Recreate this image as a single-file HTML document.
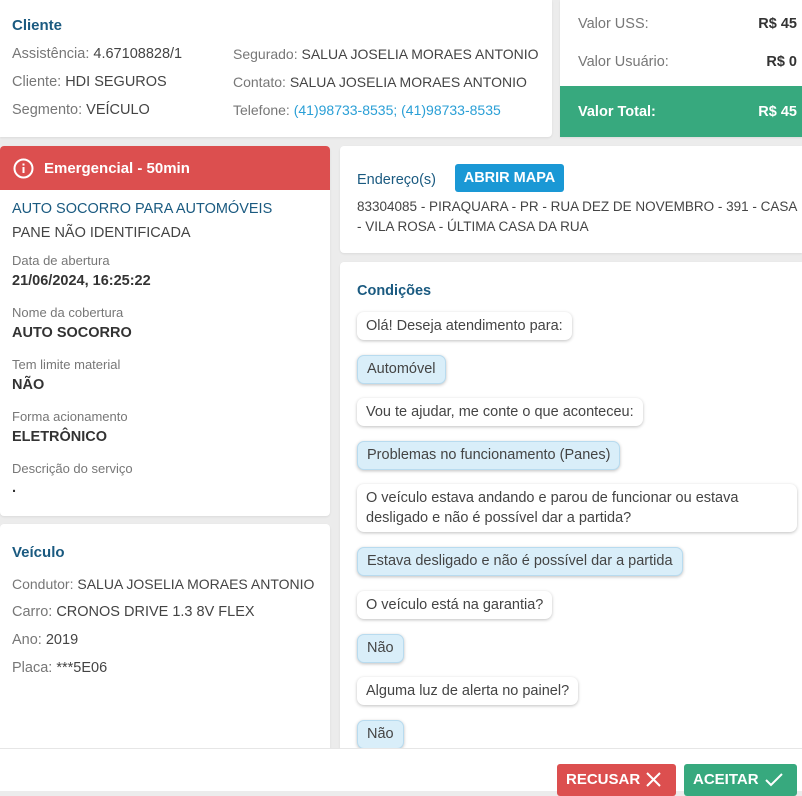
<!DOCTYPE html>
<html><head><meta charset="utf-8">
<style>
*{box-sizing:border-box;margin:0;padding:0}
body{width:802px;height:791px;overflow:hidden;background:#ececec;font-family:"Liberation Sans",sans-serif;font-size:14.5px;color:#444;position:relative}
.card{position:absolute;background:#fff;border-radius:4px;box-shadow:0 1px 2px rgba(0,0,0,.08)}
.t{position:absolute;white-space:nowrap}
.h{color:#1a5a80;font-weight:bold;font-size:15px}
.g{color:#777}
.lbl{color:#777;font-size:13px}
.b{font-weight:bold;color:#333}
.bub{position:absolute;left:357px;background:#fff;border-radius:7px;box-shadow:0 1px 3px rgba(0,0,0,.25);padding:0 9px;line-height:28px;white-space:nowrap;color:#444;font-size:14.5px}
.blue{background:#d9eef9;border:1px solid #b8dbef;line-height:27px}
</style></head><body>
<div class="card" style="left:0;top:0;width:552px;height:137px;border-radius:0 0 4px 0">
<div class="t h" style="left:12px;top:17px">Cliente</div>
<div class="t" style="left:12px;top:46px"><span class="g">Assistência:</span> 4.67108828/1</div>
<div class="t" style="left:12px;top:74px"><span class="g">Cliente:</span> HDI SEGUROS</div>
<div class="t" style="left:12px;top:102px"><span class="g">Segmento:</span> VEÍCULO</div>
<div class="t" style="left:233px;top:46px;font-size:14px"><span class="g">Segurado:</span> SALUA JOSELIA MORAES ANTONIO</div>
<div class="t" style="left:233px;top:74px;font-size:14px"><span class="g">Contato:</span> SALUA JOSELIA MORAES ANTONIO</div>
<div class="t" style="left:233px;top:102px;font-size:14px"><span class="g">Telefone:</span> <span style="color:#2a9fd6">(41)98733-8535; (41)98733-8535</span></div>
</div>
<div class="card" style="left:560px;top:0;width:242px;height:137px;border-radius:0;overflow:hidden">
<div class="t g" style="left:18px;top:16px">Valor USS:</div>
<div class="t b" style="right:5px;top:16px">R$ 45</div>
<div class="t g" style="left:18px;top:54px">Valor Usuário:</div>
<div class="t b" style="right:5px;top:54px">R$ 0</div>
<div style="position:absolute;left:0;top:86px;width:242px;height:51px;background:#37a97e;color:#fff">
<div class="t" style="left:18px;top:18px;font-weight:bold">Valor Total:</div>
<div class="t" style="right:5px;top:18px;font-weight:bold">R$ 45</div></div>
</div>
<div class="card" style="left:0;top:146px;width:330px;height:370px;overflow:hidden">
<div style="height:44px;background:#dc4f4f;color:#fff;position:relative">
<svg style="position:absolute;left:13px;top:12px" width="21" height="21" viewBox="0 0 21 21"><circle cx="10.5" cy="10.5" r="9" fill="none" stroke="#fff" stroke-width="2"/><rect x="9.5" y="9" width="2" height="6" fill="#fff"/><rect x="9.5" y="5.5" width="2" height="2" fill="#fff"/></svg>
<div class="t" style="left:44px;top:14px;font-weight:bold;font-size:15px">Emergencial - 50min</div></div>
<div class="t" style="left:12px;top:55px;color:#1a5a80;font-size:14.5px">AUTO SOCORRO PARA AUTOMÓVEIS</div>
<div class="t" style="left:12px;top:79px">PANE NÃO IDENTIFICADA</div>
<div class="t lbl" style="left:12px;top:107px">Data de abertura</div>
<div class="t b" style="left:12px;top:127px">21/06/2024, 16:25:22</div>
<div class="t lbl" style="left:12px;top:159px">Nome da cobertura</div>
<div class="t b" style="left:12px;top:179px">AUTO SOCORRO</div>
<div class="t lbl" style="left:12px;top:211px">Tem limite material</div>
<div class="t b" style="left:12px;top:231px">NÃO</div>
<div class="t lbl" style="left:12px;top:263px">Forma acionamento</div>
<div class="t b" style="left:12px;top:283px">ELETRÔNICO</div>
<div class="t lbl" style="left:12px;top:315px">Descrição do serviço</div>
<div class="t b" style="left:12px;top:334px">.</div>
</div>
<div class="card" style="left:0;top:524px;width:330px;height:230px">
<div class="t h" style="left:12px;top:20px">Veículo</div>
<div class="t" style="left:12px;top:52px;font-size:14px"><span class="g">Condutor:</span> SALUA JOSELIA MORAES ANTONIO</div>
<div class="t" style="left:12px;top:80px"><span class="g">Carro:</span> CRONOS DRIVE 1.3 8V FLEX</div>
<div class="t" style="left:12px;top:108px"><span class="g">Ano:</span> 2019</div>
<div class="t" style="left:12px;top:136px"><span class="g">Placa:</span> ***5E06</div>
</div>
<div class="card" style="left:340px;top:146px;width:462px;height:107px;border-radius:4px 0 0 4px">
<div class="t h" style="left:17px;top:26px;font-weight:normal;font-size:14.5px">Endereço(s)</div>
<div style="position:absolute;left:115px;top:18px;width:109px;height:28px;background:#1a98d5;border-radius:3px;color:#fff;font-weight:bold;text-align:center;line-height:28px;font-size:14.5px">ABRIR MAPA</div>
<div class="t" style="left:17px;top:53px;font-size:13.5px">83304085 - PIRAQUARA - PR - RUA DEZ DE NOVEMBRO - 391 - CASA</div>
<div class="t" style="left:17px;top:73px;font-size:13.5px">- VILA ROSA - ÚLTIMA CASA DA RUA</div>
</div>
<div class="card" style="left:340px;top:262px;width:462px;height:492px;border-radius:4px 0 0 0"></div>
<div class="t h" style="left:357px;top:283px;font-size:14.5px">Condições</div>
<div class="bub" style="top:312px">Olá! Deseja atendimento para:</div>
<div class="bub blue" style="top:355px">Automóvel</div>
<div class="bub" style="top:398px">Vou te ajudar, me conte o que aconteceu:</div>
<div class="bub blue" style="top:441px">Problemas no funcionamento (Panes)</div>
<div class="bub" style="top:484px;line-height:20px;padding:4px 9px;white-space:normal;width:440px">O veículo estava andando e parou de funcionar ou estava desligado e não é possível dar a partida?</div>
<div class="bub blue" style="top:547px">Estava desligado e não é possível dar a partida</div>
<div class="bub" style="top:591px">O veículo está na garantia?</div>
<div class="bub blue" style="top:634px">Não</div>
<div class="bub" style="top:677px">Alguma luz de alerta no painel?</div>
<div class="bub blue" style="top:720px">Não</div>
<div style="position:absolute;left:0;top:748px;width:802px;height:43px;background:#fff;border-top:1px solid #e6e6e6"></div>
<div style="position:absolute;left:557px;top:764px;width:119px;height:32px;background:#dc4f4f;border-radius:3px;color:#fff;font-weight:bold;font-size:15px">
<span class="t" style="left:9px;top:7px">RECUSAR</span>
<svg style="position:absolute;left:89px;top:8px" width="15" height="15" viewBox="0 0 15 15"><path d="M1 1L14 14M14 1L1 14" stroke="#fff" stroke-width="2"/></svg></div>
<div style="position:absolute;left:684px;top:764px;width:113px;height:32px;background:#37a97e;border-radius:3px;color:#fff;font-weight:bold;font-size:15px">
<span class="t" style="left:9px;top:7px">ACEITAR</span>
<svg style="position:absolute;left:81px;top:8px" width="18" height="15" viewBox="0 0 18 15"><path d="M1 8L6 13L17 2" stroke="#fff" stroke-width="2" fill="none"/></svg></div>
</body></html>
